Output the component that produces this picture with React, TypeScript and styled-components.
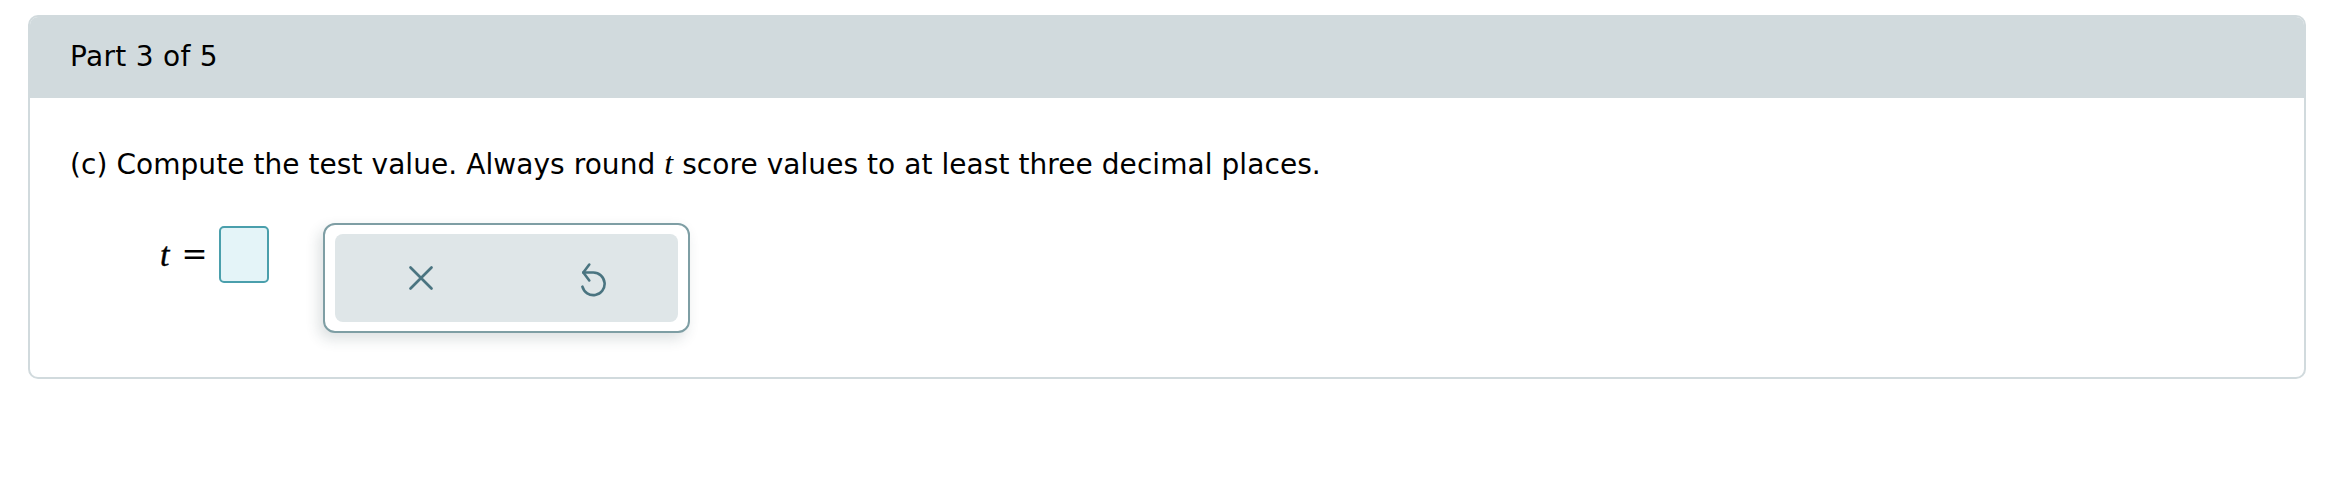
import React from 'react';
import styled, { createGlobalStyle } from 'styled-components';

const GlobalStyle = createGlobalStyle`
  html, body {
    margin: 0;
    padding: 0;
    background: #ffffff;
  }
  body {
    font-family: 'DejaVu Sans', Verdana, sans-serif;
    color: #000000;
  }
`;

// --- layout ---
const Page = styled.div`
  padding: 15px 24px 0 28px;
`;

const Card = styled.section`
  border: 2px solid #d1dadd;
  border-radius: 10px;
  overflow: hidden;
  background: #ffffff;
`;

const CardHeader = styled.header`
  height: 83px;
  margin: -2px -2px 0;
  background: #d1dadd;
  display: flex;
  align-items: center;
  padding: 0 42px;
  font-size: 28px;
  letter-spacing: 0.3px;
`;

const CardBody = styled.div`
  padding: 50px 40px 44px;
`;

const Prompt = styled.p`
  margin: 0;
  font-size: 28px;
  line-height: 30px;
  letter-spacing: 0.06px;
`;

const MathVar = styled.span`
  font-family: 'Liberation Serif', 'Times New Roman', serif;
  font-style: italic;
  font-size: 32px;
`;

const AnswerRow = styled.div`
  display: flex;
  align-items: flex-start;
  margin-top: 43px;
`;

const Equation = styled.div`
  display: flex;
  align-items: center;
  gap: 12px;
  margin: 3px 0 0 90px;
  height: 57px;

  ${MathVar} {
    font-size: 34px;
    -webkit-text-stroke: 0.4px #000;
  }
`;

const Equals = styled.span`
  font-family: 'DejaVu Serif', serif;
  font-size: 31px;
  line-height: 1;
`;

const AnswerInput = styled.div`
  width: 50px;
  height: 57px;
  box-sizing: border-box;
  border: 2px solid #4a9fac;
  border-radius: 5px;
  background: #e4f4f8;
`;

// --- tool palette beside the answer ---
const Palette = styled.div`
  margin-left: 54px;
  width: 367px;
  height: 110px;
  box-sizing: border-box;
  border: 2px solid #7e9ea4;
  border-radius: 12px;
  background: #ffffff;
  padding: 9px 10px;
  box-shadow: -4px 6px 14px rgba(40, 60, 70, 0.16);
`;

const PaletteInner = styled.div`
  height: 100%;
  background: #dfe6e8;
  border-radius: 8px;
  display: grid;
  grid-template-columns: 1fr 1fr;
`;

const ToolButton = styled.button`
  border: 0;
  background: transparent;
  display: flex;
  align-items: center;
  justify-content: center;
  padding: 0;
  cursor: pointer;
  color: #4a7480;
`;

const ClearIcon = () => (
  <svg width="26" height="26" viewBox="0 0 26 26" fill="none">
    <path d="M2.5 2.5 L23.5 23.5 M23.5 2.5 L2.5 23.5" stroke="currentColor" strokeWidth="2.7" strokeLinecap="round" />
  </svg>
);

const UndoIcon = () => (
  <svg width="28" height="36" viewBox="0 0 28 36" fill="none" style={{ marginTop: 2 }}>
    <path
      d="M4.3 11.5 H14.3 A11.3 11.3 0 1 1 3.4 25.7"
      stroke="currentColor"
      strokeWidth="2.6"
      strokeLinecap="round"
      strokeLinejoin="round"
    />
    <path d="M10.3 3.5 L4.3 11.5 L10.3 19.5" stroke="currentColor" strokeWidth="2.6" strokeLinecap="round" strokeLinejoin="round" />
  </svg>
);

export default function App() {
  return (
    <Page>
      <GlobalStyle />
      <Card>
        <CardHeader>Part 3 of 5</CardHeader>
        <CardBody>
          <Prompt>
            (c) Compute the test value. Always round <MathVar>t</MathVar> score values to at least three decimal places.
          </Prompt>
          <AnswerRow>
            <Equation>
              <MathVar>t</MathVar>
              <Equals>=</Equals>
              <AnswerInput />
            </Equation>
            <Palette>
              <PaletteInner>
                <ToolButton aria-label="Clear">
                  <ClearIcon />
                </ToolButton>
                <ToolButton aria-label="Undo">
                  <UndoIcon />
                </ToolButton>
              </PaletteInner>
            </Palette>
          </AnswerRow>
        </CardBody>
      </Card>
    </Page>
  );
}
